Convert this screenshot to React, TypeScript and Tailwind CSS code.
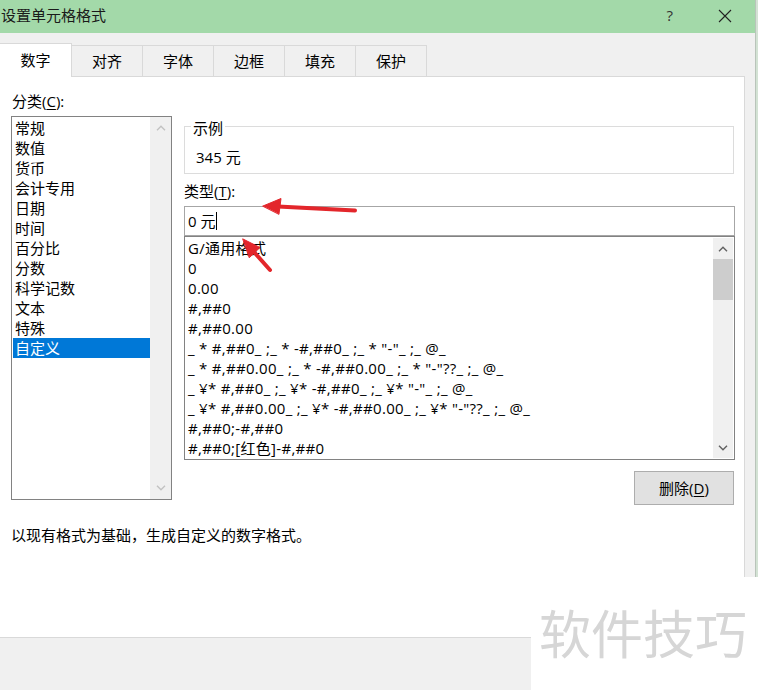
import React from "react";

const categories = ["常规", "数值", "货币", "会计专用", "日期", "时间", "百分比", "分数", "科学记数", "文本", "特殊", "自定义"];
const formats = [
  "G/通用格式",
  "0",
  "0.00",
  "#,##0",
  "#,##0.00",
  '_ * #,##0_ ;_ * -#,##0_ ;_ * "-"_ ;_ @_',
  '_ * #,##0.00_ ;_ * -#,##0.00_ ;_ * "-"??_ ;_ @_',
  '_ ¥* #,##0_ ;_ ¥* -#,##0_ ;_ ¥* "-"_ ;_ @_',
  '_ ¥* #,##0.00_ ;_ ¥* -#,##0.00_ ;_ ¥* "-"??_ ;_ @_',
  "#,##0;-#,##0",
  "#,##0;[红色]-#,##0",
];
const tabs = ["数字", "对齐", "字体", "边框", "填充", "保护"];

function Chevron({ up, color }: { up?: boolean; color: string }) {
  return (
    <svg width="10" height="6" viewBox="0 0 10 6">
      <path d={up ? "M1 5.2 L5 1.2 L9 5.2" : "M1 0.8 L5 4.8 L9 0.8"} fill="none" stroke={color} strokeWidth="1.4" />
    </svg>
  );
}

export default function App() {
  return (
    <div className="relative w-[758px] h-[690px] overflow-hidden bg-white font-['Open_Sans','Noto_Sans_CJK_SC',sans-serif] text-[15px] text-black">
      <div className="flex h-full">
        <div className="w-[755px] h-full flex flex-col bg-[#f0f0f0]">
          {/* title bar */}
          <div className="h-[33px] bg-[#a3d9a9] flex items-center pb-[3px] shrink-0">
            <div className="pl-[1px] text-[15px] leading-[20px] text-[#1a1a1a]">设置单元格格式</div>
            <div className="ml-auto mr-[45px] text-[15px] leading-[20px] text-[#333]">?</div>
            <svg width="14" height="14" viewBox="0 0 14 14" className="mr-[23px] mt-[1px]">
              <path d="M1 1 L13 13 M13 1 L1 13" stroke="#222" strokeWidth="1.1" />
            </svg>
          </div>
          {/* tabs */}
          <div className="h-[43px] flex items-end shrink-0">
            {tabs.map((t, i) =>
              i === 0 ? (
                <div
                  key={t}
                  className="relative z-10 -mb-px h-[34px] w-[72px] bg-white border-t border-r border-[#d9d9d9] flex items-center justify-center leading-[20px] pb-[2px]"
                >
                  {t}
                </div>
              ) : (
                <div
                  key={t}
                  className="h-[31px] w-[71px] bg-[#f0f0f0] border-t border-r border-[#d9d9d9] flex items-center justify-center leading-[20px]"
                >
                  {t}
                </div>
              )
            )}
          </div>
          {/* panel */}
          <div className="w-[745px] h-[562px] shrink-0 bg-white border border-l-0 border-[#d9d9d9] flex flex-col">
            <div className="flex items-start">
              {/* left column */}
              <div className="ml-[11px] pt-[14px] w-[161px]">
                <div className="leading-[20px] pl-[1px]">
                  分类(<span className="underline underline-offset-2">C</span>):
                </div>
                <div className="mt-[5px] h-[384px] border border-[#828282] flex">
                  <div className="flex-1 pt-[1px] pl-[1px]">
                    {categories.map((c, i) => (
                      <div
                        key={c}
                        className={
                          i === categories.length - 1
                            ? "h-[20px] leading-[20px] pl-[2px] bg-[#0078d7] text-white"
                            : "h-[20px] leading-[20px] pl-[2px]"
                        }
                      >
                        {c}
                      </div>
                    ))}
                  </div>
                  <div className="w-[21px] bg-[#f0f0f0] flex flex-col items-center justify-between py-[8px]">
                    <Chevron up color="#c2c2c2" />
                    <Chevron color="#c2c2c2" />
                  </div>
                </div>
              </div>
              {/* right column */}
              <div className="ml-[12px] pt-[49px] w-[551px] flex flex-col">
                <div className="relative w-[550px] h-[48px] border border-[#dcdcdc] pt-[20px] pl-[11px] leading-[20px]">
                  <div className="absolute left-[6px] top-[-9px] bg-white px-[2px] leading-[20px]">示例</div>
                  345 元
                </div>
                <div className="mt-[7px] leading-[20px]">
                  类型(<span className="underline underline-offset-2">T</span>):
                </div>
                <div className="mt-[5px] h-[30px] border border-[#a6a6a6] flex items-center pl-[3px] leading-[20px]">
                  <span className="whitespace-pre">0 元</span>
                  <span className="inline-block w-px h-[18px] bg-black ml-[1px]" />
                </div>
                <div className="h-[224px] border border-[#828282] flex">
                  <div className="flex-1 pt-[1px] pl-[3px] tracking-[0.3px]">
                    {formats.map((f) => (
                      <div key={f} className="h-[20px] leading-[20px] whitespace-pre">
                        {f}
                      </div>
                    ))}
                  </div>
                  <div className="w-[20px] bg-[#f0f0f0] flex flex-col items-center mr-[1px] my-[1px]">
                    <div className="h-[21px] flex items-center justify-center">
                      <Chevron up color="#606060" />
                    </div>
                    <div className="w-[20px] h-[41px] bg-[#cdcdcd]" />
                    <div className="mt-auto h-[21px] flex items-center justify-center">
                      <Chevron color="#606060" />
                    </div>
                  </div>
                </div>
                <div className="self-end mt-[11px] w-[100px] h-[34px] bg-[#e1e1e1] border border-[#adadad] flex items-center justify-center leading-[20px] mr-[1px]">
                  删除(<span className="underline underline-offset-2">D</span>)
                </div>
              </div>
            </div>
            <div className="mt-[20px] ml-[11px] leading-[20px]">以现有格式为基础，生成自定义的数字格式。</div>
          </div>
        </div>
        <div className="flex-1 h-[577px] bg-[#d3e2d4] border-l border-[#b9c4ba]" />
      </div>

      {/* red annotation arrows */}
      <svg className="absolute inset-0 pointer-events-none" width="758" height="690" viewBox="0 0 758 690">
        <g fill="#e3262b" stroke="#e3262b" strokeLinecap="round">
          <line x1="278" y1="206.5" x2="355" y2="210.5" strokeWidth="4" />
          <polygon points="263,206 281,198.5 279,214" strokeWidth="1" strokeLinejoin="round" />
          <line x1="254" y1="252" x2="270" y2="270" strokeWidth="4" />
          <polygon points="243,239 260,247.5 249.5,257.5" strokeWidth="1" strokeLinejoin="round" />
        </g>
      </svg>

      {/* watermark */}
      <div className="absolute left-[531px] top-[577px] w-[227px] h-[113px] bg-white">
        <div className="pl-[8px] pt-[29px] text-[52px] leading-[52px] text-[#d6d6d6] whitespace-nowrap font-['Noto_Sans_CJK_SC',sans-serif]">软件技巧</div>
      </div>
    </div>
  );
}
